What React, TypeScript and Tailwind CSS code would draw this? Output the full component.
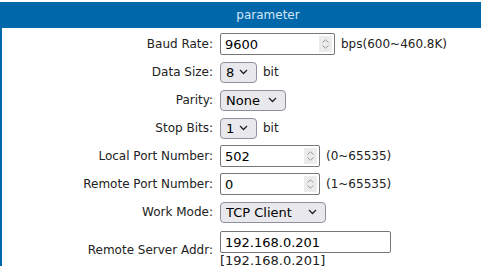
import React from 'react';

const font = { fontFamily: '"DejaVu Sans", Verdana, sans-serif' };

const Chevron = () => (
  <svg width="9" height="6" viewBox="0 0 9 6" className="absolute right-[9px] top-1/2 -translate-y-1/2 pointer-events-none">
    <path d="M1 1 L4.5 4.5 L8 1" fill="none" stroke="#222" strokeWidth="1.3" />
  </svg>
);

const Spinner = () => (
  <div className="absolute right-[3px] top-[3px] bottom-[3px] w-[13px] bg-[#ececec] flex flex-col items-center justify-center gap-[2px] pointer-events-none">
    <svg width="7" height="4" viewBox="0 0 7 4"><path d="M0.5 3.5 L3.5 0.8 L6.5 3.5" fill="none" stroke="#9a9a9a" strokeWidth="1" /></svg>
    <svg width="7" height="4" viewBox="0 0 7 4"><path d="M0.5 0.5 L3.5 3.2 L6.5 0.5" fill="none" stroke="#9a9a9a" strokeWidth="1" /></svg>
  </div>
);

const NumInput = ({ value, w }: { value: string; w: string }) => (
  <div className={`relative h-[22px] ${w}`}>
    <input
      readOnly
      value={value}
      className="w-full h-full border border-[#767676] rounded-[2px] bg-white pl-[4px] text-[13px] text-black outline-none"
      style={font}
    />
    <Spinner />
  </div>
);

const Select = ({ value, w }: { value: string; w: string }) => (
  <div className={`relative h-[21px] ${w}`}>
    <select
      className="appearance-none w-full h-full border border-[#8f8f9d] rounded-[4px] bg-[#e9e9ed] pl-[5px] text-[13px] text-black outline-none"
      style={font}
      defaultValue={value}
    >
      <option>{value}</option>
    </select>
    <Chevron />
  </div>
);

const Row = ({ label, children }: { label: string; children: React.ReactNode }) => (
  <div className="grid grid-cols-[211px_1fr] gap-x-[7px] items-center h-[28px]">
    <div className="text-right text-[12px] text-[#222]">{label}</div>
    <div className="flex items-center gap-[6px] text-[12px] text-[#222]">{children}</div>
  </div>
);

export default function App() {
  return (
    <div className="w-[481px] h-[266px] overflow-hidden bg-white" style={font}>
      <div className="w-[536px] pt-[2px]">
        <div className="h-[26px] bg-[#0067ab] flex items-center justify-center text-[12px] text-[#d4e6f5]">
          parameter
        </div>
        <div className="border-l-2 border-[#0067ab] pt-[2px] h-[300px]">
          <Row label="Baud Rate:">
            <NumInput value="9600" w="w-[115px]" />
            <span>bps(600~460.8K)</span>
          </Row>
          <Row label="Data Size:">
            <Select value="8" w="w-[37px]" />
            <span>bit</span>
          </Row>
          <Row label="Parity:">
            <Select value="None" w="w-[66px]" />
          </Row>
          <Row label="Stop Bits:">
            <Select value="1" w="w-[37px]" />
            <span>bit</span>
          </Row>
          <Row label="Local Port Number:">
            <NumInput value="502" w="w-[100px]" />
            <span>(0~65535)</span>
          </Row>
          <Row label="Remote Port Number:">
            <NumInput value="0" w="w-[100px]" />
            <span>(1~65535)</span>
          </Row>
          <Row label="Work Mode:">
            <Select value="TCP Client" w="w-[106px]" />
          </Row>
          <div className="grid grid-cols-[211px_1fr] gap-x-[7px] items-center h-[46px]">
            <div className="text-right text-[12px] text-[#222] pt-[2px]">Remote Server Addr:</div>
            <div className="flex flex-col items-start pt-[1px]">
              <input
                readOnly
                value="192.168.0.201"
                className="w-[171px] h-[22px] border border-[#767676] rounded-[2px] bg-white pl-[4px] text-[13px] text-black outline-none"
                style={font}
              />
              <span className="text-[13px] leading-[15px] text-[#222]">[192.168.0.201]</span>
            </div>
          </div>
        </div>
      </div>
    </div>
  );
}
